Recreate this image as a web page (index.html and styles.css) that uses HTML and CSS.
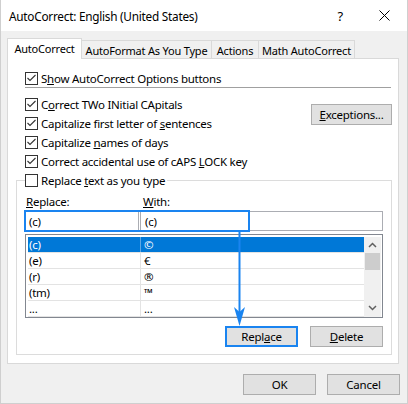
FILE: index.html
```html
<!DOCTYPE html>
<html>
<head>
<meta charset="utf-8">
<link rel="stylesheet" href="styles.css">
</head>
<body>
<div class="window">
  <div class="titlebar">
    <span class="title">AutoCorrect: English (United States)</span>
    <span class="help">?</span>
    <svg class="close" viewBox="0 0 11 11"><path d="M0.5 0.5 L10.5 10.5 M10.5 0.5 L0.5 10.5" stroke="#000" stroke-width="1" fill="none"/></svg>
  </div>
  <div class="body">
    <div class="tabs">
      <div class="tab active">AutoCorrect</div>
      <div class="tab t2">AutoFormat As You Type</div>
      <div class="tab t3">Actions</div>
      <div class="tab t4">Math AutoCorrect</div>
    </div>
    <div class="panel">
      <div class="check-row show">
        <svg class="cb" viewBox="0 0 13 13"><rect x="0.5" y="0.5" width="12" height="12" fill="#fff" stroke="#333"/><path d="M2.5 6 L5 8.5 L10.5 3" fill="none" stroke="#333" stroke-width="1.1"/></svg>
        <span>S<u>h</u>ow AutoCorrect Options buttons</span>
      </div>
      <div class="sep"></div>
      <div class="options">
        <div class="opt-list">
          <div class="check-row">
            <svg class="cb" viewBox="0 0 13 13"><rect x="0.5" y="0.5" width="12" height="12" fill="#fff" stroke="#333"/><path d="M2.5 6 L5 8.5 L10.5 3" fill="none" stroke="#333" stroke-width="1.1"/></svg>
            <span>C<u>o</u>rrect TWo INitial CApitals</span>
          </div>
          <div class="check-row">
            <svg class="cb" viewBox="0 0 13 13"><rect x="0.5" y="0.5" width="12" height="12" fill="#fff" stroke="#333"/><path d="M2.5 6 L5 8.5 L10.5 3" fill="none" stroke="#333" stroke-width="1.1"/></svg>
            <span>Capitalize first letter of <u>s</u>entences</span>
          </div>
          <div class="check-row">
            <svg class="cb" viewBox="0 0 13 13"><rect x="0.5" y="0.5" width="12" height="12" fill="#fff" stroke="#333"/><path d="M2.5 6 L5 8.5 L10.5 3" fill="none" stroke="#333" stroke-width="1.1"/></svg>
            <span>Capitalize <u>n</u>ames of days</span>
          </div>
          <div class="check-row">
            <svg class="cb" viewBox="0 0 13 13"><rect x="0.5" y="0.5" width="12" height="12" fill="#fff" stroke="#333"/><path d="M2.5 6 L5 8.5 L10.5 3" fill="none" stroke="#333" stroke-width="1.1"/></svg>
            <span>Correct accidental use of cAPS <u>L</u>OCK key</span>
          </div>
        </div>
        <button class="btn exceptions"><span><u>E</u>xceptions...</span></button>
      </div>
      <fieldset class="group">
        <legend>
          <span class="check-row legend-row">
            <svg class="cb" viewBox="0 0 13 13"><rect x="0.5" y="0.5" width="12" height="12" fill="#fff" stroke="#333"/></svg>
            <span>Replace <u>t</u>ext as you type</span>
          </span>
        </legend>
        <div class="labels">
          <span class="l1"><u>R</u>eplace:</span>
          <span class="l2"><u>W</u>ith:</span>
        </div>
        <div class="inputs">
          <div class="inp inp1">(c)</div>
          <div class="inp inp2">(c)</div>
          <div class="hl"></div>
        </div>
        <div class="list">
          <div class="rows">
            <div class="row sel"><span class="c1">(c)</span><span class="c2">©</span></div>
            <div class="row"><span class="c1">(e)</span><span class="c2">€</span></div>
            <div class="row"><span class="c1">(r)</span><span class="c2">®</span></div>
            <div class="row"><span class="c1">(tm)</span><span class="c2">™</span></div>
            <div class="row"><span class="c1">...</span><span class="c2">...</span></div>
          </div>
          <div class="sb">
            <div class="sb-up"><svg viewBox="0 0 9 6" class="chev"><path d="M1 5 L4.5 1.5 L8 5" fill="none" stroke="#606060" stroke-width="1.5"/></svg></div>
            <div class="thumb"></div>
            <div class="track"></div>
            <div class="sb-down"><svg viewBox="0 0 9 6" class="chev"><path d="M1 1 L4.5 4.5 L8 1" fill="none" stroke="#606060" stroke-width="1.5"/></svg></div>
          </div>
        </div>
        <div class="actions">
          <button class="btn focus"><span>Repl<u>a</u>ce</span></button>
          <button class="btn"><span><u>D</u>elete</span></button>
        </div>
      </fieldset>
    </div>
    <div class="footer">
      <button class="btn">OK</button>
      <button class="btn">Cancel</button>
    </div>
  </div>
</div>
<svg class="arrow" width="408" height="404" viewBox="0 0 408 404">
  <line x1="239.5" y1="231" x2="239.5" y2="312" stroke="#1a84f0" stroke-width="2"/>
  <path d="M234 307 L239.5 312 L245 307 L239.5 326 Z" fill="#1a84f0"/>
</svg>
</body>
</html>
```
FILE: styles.css
```css
* { box-sizing: border-box; }
html, body { margin: 0; padding: 0; }
body {
  width: 408px;
  height: 404px;
  font-family: "Noto Sans", "Open Sans", sans-serif;
  font-size: 11.5px;
  letter-spacing: -0.25px;
  color: #000;
  background: #f0f0f0;
  overflow: hidden;
}
.window {
  width: 408px;
  height: 404px;
  border: 1px solid #cfcfcf;
  border-top: 0;
  background: #f0f0f0;
}
.titlebar {
  height: 31px;
  background: #fff;
  display: flex;
  align-items: center;
  padding: 0 17px 0 8px;
}
.title { font-size: 11.8px; }
.help { margin-left: auto; margin-right: 36px; font-size: 13px; }
.close { width: 11px; height: 11px; display: block; }

.body { padding: 7px 8px 0 6px; }
.tabs {
  display: flex;
  align-items: flex-end;
  height: 21px;
  position: relative;
  z-index: 1;
  font-size: 11px;
  letter-spacing: -0.2px;
}
.tab {
  height: 18px;
  margin-bottom: 1px;
  border: 1px solid #d9d9d9;
  border-left: 0;
  border-bottom: 0;
  display: flex;
  align-items: center;
  justify-content: center;
  padding-top: 1px;
  white-space: nowrap;
}
.tab.active {
  width: 75px;
  height: 21px;
  margin-bottom: 0;
  border-left: 1px solid #d9d9d9;
  background: #fff;
  padding-top: 0;
  padding-bottom: 1px;
}
.t2 { width: 130px; }
.t3 { width: 47px; }
.t4 { width: 96px; }

.panel {
  margin-top: -1px;
  background: #fff;
  border: 1px solid #d9d9d9;
  padding: 10px 6px 8px 8px;
}
.check-row {
  display: flex;
  align-items: center;
  height: 19px;
  padding-left: 9px;
  white-space: nowrap;
}
.check-row.show { height: 18px; }
.cb { width: 13px; height: 13px; margin-right: 3px; flex: none; display: block; }
.sep { height: 1px; background: #a0a0a0; margin: 0 1px 0 9px; }
.options { display: flex; margin-top: 7px; }

.btn {
  height: 21px;
  background: #e1e1e1;
  border: 1px solid #adadad;
  font: inherit;
  letter-spacing: inherit;
  color: #000;
  padding: 0;
  margin: 0;
  display: flex;
  align-items: center;
  justify-content: center;
  border-radius: 0;
}
.exceptions { margin-left: auto; margin-top: 9px; width: 81px; }

.group {
  margin: 0;
  border: 1px solid #dcdcdc;
  padding: 0 8px 7px 8px;
  min-width: 0;
}
.group legend { padding: 0 2px 0 0; margin: 0; }
.legend-row { padding-left: 0; display: flex; }

.labels { display: flex; align-items: center; height: 18px; margin-top: 2px; white-space: nowrap; }
.l1 { width: 118px; padding-left: 1px; }

.inputs { position: relative; display: flex; gap: 1px; height: 20px; margin-top: 1px; }
.inp {
  height: 20px;
  border: 1px solid #abadb3;
  background: #fff;
  display: flex;
  align-items: center;
  padding-left: 3px;
}
.inp1 { width: 114px; }
.inp2 { flex: 1; padding-left: 4px; }
.hl {
  position: absolute;
  left: -1px;
  top: -1px;
  width: 226px;
  height: 22px;
  border: 2px solid #1a84f0;
}

.list {
  margin-top: 3px;
  height: 84px;
  border: 1px solid #828790;
  background: #fff;
  display: flex;
  padding: 2px 1px 0 2px;
}
.rows { width: 336px; }
.row {
  display: flex;
  height: 16px;
  border-bottom: 1px solid #e3e3e3;
  line-height: 15px;
  white-space: nowrap;
}
.c1 { width: 113px; border-right: 1px solid #e3e3e3; padding-left: 1px; }
.c2 { flex: 1; padding-left: 3px; }
.row.sel { background: #0078d7; color: #fff; }
.row.sel .c1 { border-right-color: #5fa8e4; }

.sb { width: 17px; height: 80px; background: #f0f0f0; display: flex; flex-direction: column; }
.sb-up { height: 16px; display: flex; align-items: center; justify-content: center; }
.sb-down { height: 16px; display: flex; align-items: center; justify-content: center; padding-bottom: 3px; }
.chev { width: 9px; height: 6px; display: block; }
.thumb { height: 17px; margin: 0 1px; background: #cdcdcd; }
.track { flex: 1; }

.actions { display: flex; justify-content: flex-end; gap: 12px; margin-top: 8px; }
.actions .btn { width: 73px; }
.btn.focus { border: 2px solid #1a84f0; }

.footer { display: flex; justify-content: flex-end; gap: 11px; padding-top: 10px; margin-right: -1px; }
.footer .btn { width: 73px; }

.arrow { position: absolute; left: 0; top: 0; pointer-events: none; }
```
